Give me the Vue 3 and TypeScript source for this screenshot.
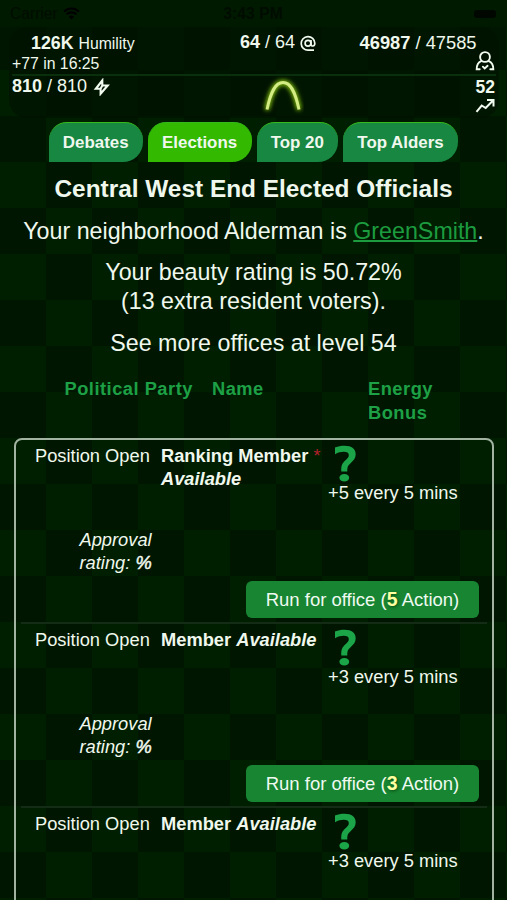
<script setup lang="ts">
interface Office {
  title: string
  bonus: number
  cost: number
  starred?: boolean
}

const tabs = ['Debates', 'Elections', 'Top 20', 'Top Alders']
const activeTab = 'Elections'

const offices: Office[] = [
  { title: 'Ranking Member', bonus: 5, cost: 5, starred: true },
  { title: 'Member', bonus: 3, cost: 3 },
  { title: 'Member', bonus: 3, cost: 3 },
]
</script>

<template>
  <div class="screen">
    <div class="status">
      <span class="carrier">Carrier
        <svg class="wifi" viewBox="0 0 16 12" width="17" height="13">
          <path d="M8 11.6 5.6 9a3.4 3.4 0 0 1 4.8 0z" />
          <path d="M3.4 6.8a6.5 6.5 0 0 1 9.2 0M1 4.2a9.9 9.9 0 0 1 14 0" fill="none" stroke="#000" stroke-width="2" />
        </svg>
      </span>
      <span class="clock">3:43 PM</span>
      <span class="battery"></span>
    </div>

    <header class="stats">
      <div class="stats-top">
        <div class="humility">
          <div class="amount"><b>126K</b> <span class="small word">Humility</span></div>
          <div class="small regen">+77 in 16:25</div>
        </div>
        <div class="actions"><b>64</b> / 64
          <svg viewBox="0 0 16 17" width="16" height="17" fill="none" stroke="#f2fbf0" stroke-width="1.7">
            <path d="M14 15.200H8.2A6.8 6.8 0 1 1 14.8 8.2c0 3.6-3.8 3.6-3.8.8V5" />
            <circle cx="8" cy="8.2" r="2.9" />
          </svg>
        </div>
        <div class="health">
          <div><b>46987</b> / 47585</div>
          <svg viewBox="0 0 20 20" width="20" height="20" fill="none" stroke="#f2fbf0" stroke-width="1.9" stroke-linecap="round">
            <circle cx="10" cy="6" r="4.9" />
            <path d="M6.200 10.200C3 11.500 1.700 14 1.700 18.200h3M13.800 10.200c3.200 1.300 4.500 3.800 4.500 8h-3" />
            <path d="M7.900 15.700 9.700 17.500l2.900-2.700" stroke-width="1.900" />
          </svg>
        </div>
      </div>
      <div class="stats-bottom">
        <div class="energy"><b>810</b> / 810
          <svg viewBox="0 0 17 18" width="17" height="18" fill="none" stroke="#f2fbf0" stroke-width="2.1">
            <path d="M9.300 2.500 2.800 10.800H7.600V15.800L14.700 7.500H9.300zM9.300 7.500 7.600 10.800" />
          </svg>
        </div>
        <svg class="arch" viewBox="0 0 44 40" width="44" height="40" fill="none">
          <path d="M7 33.500C11 15 15.500 6.500 23 6.500S35 15 39 33.500" />
        </svg>
        <div class="level">
          <b>52</b>
          <svg viewBox="0 0 20 15" width="20" height="15" fill="none" stroke="#f2fbf0" stroke-width="2">
            <path d="M1.500 13.800 6.700 7.500l4 2.500L17.500 3M12 2h6.500v6.500" />
          </svg>
        </div>
      </div>
    </header>

    <nav class="tabs">
      <a v-for="tab in tabs" :key="tab" class="tab" :class="{ active: tab === activeTab }">{{ tab }}</a>
    </nav>

    <main>
      <h1>Central West End Elected Officials</h1>
      <p>Your neighborhood Alderman is <a class="link">GreenSmith</a>.</p>
      <p>Your beauty rating is 50.72%<br />(13 extra resident voters).</p>
      <p>See more offices at level 54</p>

      <div class="columns">
        <span>Political Party</span>
        <span>Name</span>
        <span>Energy<br />Bonus</span>
      </div>

      <section class="list">
        <article v-for="(office, i) in offices" :key="i" class="office">
          <div class="info">
            <div>Position Open</div>
            <div class="name">
              <b>{{ office.title }}</b>&nbsp;<sup v-if="office.starred">*</sup>
              <wbr /><b class="available">Available</b>
            </div>
            <div class="bonus">
              <svg viewBox="0 0 24 38" width="24" height="38" fill="#1ba548">
                <path d="M2 3.600C5 2.300 8 1.700 11.500 1.700C18.800 1.700 22.700 5 22.700 10.300C22.700 14.300 20.500 16.500 17.800 19C15 21.500 14.300 22.500 14.300 27.500H8.300C8 21.500 9 19.500 12.300 16.500C14.600 14.400 15.800 13.200 15.800 11.200C15.800 8.800 14 7.800 10.800 7.800C8 7.800 5 8.600 2 10.200Z" />
                <ellipse cx="11.300" cy="33.700" rx="4.900" ry="3.800" />
              </svg>
              <span>+{{ office.bonus }} every 5 mins</span>
            </div>
          </div>
          <template v-if="i < 2">
            <div class="approval">Approval<br />rating: <b>%</b></div>
            <button class="run">Run for office (<b>{{ office.cost }}</b> Action)</button>
          </template>
        </article>
      </section>
    </main>
  </div>
</template>

<style>
body {
  background: #001600;
}
</style>

<style scoped>
.screen {
  box-sizing: border-box;
  width: 507px;
  height: 900px;
  overflow: hidden;
  color: #f0f8ee;
  font-family: "Liberation Sans", Arial, sans-serif;
  font-size: 18.3px;
  line-height: 23.4px;
  background: repeating-conic-gradient(#001600 0 25%, #001f00 0 50%) 46px 24px / 92px 92px;
}

.status {
  display: grid;
  grid-template-columns: 1fr auto 1fr;
  align-items: center;
  height: 27px;
  padding: 0 11px 0 10px;
  background: #001a00;
  color: #000c00;
  font-size: 15.6px;
  line-height: 27px;
}
.wifi {
  margin-left: 1px;
  vertical-align: -1px;
}
.clock {
  font-weight: 700;
  letter-spacing: 0.1px;
}
.battery {
  justify-self: end;
  width: 22px;
  height: 8px;
  border-radius: 3px;
  background: #000600;
}

.stats {
  box-sizing: border-box;
  height: 91px;
  margin: 0 8px 0 9px;
  padding: 0 3px;
  border-radius: 18px;
  background: rgba(0, 18, 0, 0.65);
  font-size: 18px;
  white-space: nowrap;
}
.stats-top {
  display: grid;
  grid-template-columns: 228px 108px 1fr;
  box-sizing: border-box;
  height: 49px;
  padding-top: 4px;
  border-bottom: 2px solid #0a2f0c;
}
.humility {
  padding-top: 1px;
}
.amount {
  padding-left: 19px;
  font-size: 17.8px;
}
.small {
  font-size: 15.8px;
}
.regen {
  line-height: 20px;
  margin-top: -1px;
}
.actions svg {
  vertical-align: -4px;
}
.health {
  display: flex;
  flex-direction: column;
  align-items: flex-end;
  font-size: 18.3px;
}
.health div {
  margin-top: -0.5px;
  padding-right: 19.5px;
}
.health svg {
  margin: -2.5px 1px 0 0;
}
.stats-bottom {
  display: grid;
  grid-template-columns: 248px 1fr auto;
}
.energy {
  line-height: 20px;
}
.energy svg {
  margin-left: 1px;
  vertical-align: -4px;
}
.arch path {
  stroke: #d3ec83;
  stroke-width: 3;
  filter: drop-shadow(0 0 2px #86bd13) drop-shadow(0 0 2px #5c9208);
}
.level {
  display: flex;
  flex-direction: column;
  align-items: flex-end;
  padding: 1px 1px 0 0;
  font-size: 17.5px;
  line-height: 21px;
}

.tabs {
  display: flex;
  justify-content: center;
  gap: 5px;
  margin-top: 4px;
}
.tab {
  box-sizing: border-box;
  height: 40px;
  padding: 0 14.500px 0 14px;
  border-top: 1px solid #35b91b;
  border-radius: 18px 18px 20px 0;
  background: #178742;
  font-size: 16.900px;
  font-weight: 700;
  line-height: 39px;
}
.tab.active {
  background: #32b900;
}

h1,
p {
  margin: 0 0 12px;
  text-align: center;
  font-size: 23.25px;
  line-height: 29.3px;
}
h1 {
  margin: 12px 0 13.500px;
  font-size: 24.4px;
}
.link {
  color: #1c9b3f;
  text-decoration: underline;
  text-decoration-thickness: 1.5px;
}
.columns {
  display: grid;
  grid-template-columns: 147.500px 156px 1fr;
  height: 61px;
  margin-top: 19px;
  padding-left: 64.500px;
  color: #1da046;
  font-weight: 700;
  line-height: 24.500px;
  letter-spacing: 0.5px;
}
.list {
  box-sizing: border-box;
  height: 520px;
  margin: 0 13px 0 14px;
  border: 2px solid #a3b3a1;
  border-radius: 8px;
}
.office {
  display: flex;
  flex-direction: column;
  box-sizing: border-box;
  height: 184px;
  margin: 0 5px;
  padding-top: 4px;
  border-bottom: 2px solid #142b15;
}
.info {
  display: grid;
  grid-template-columns: 126px 167px 1fr;
  height: 84px;
  padding-left: 14px;
}
.name sup {
  color: #b3202c;
  font-size: 18px;
  line-height: 0;
  vertical-align: 0;
}
.available,
.approval {
  font-style: italic;
}
.bonus {
  display: flex;
  flex-direction: column;
}
.bonus svg {
  margin: 0 0 -1px 5px;
}
.approval {
  padding-left: 58.500px;
}
.approval b {
  font-weight: 400;
  -webkit-text-stroke: 0.5px #f0f8ee;
}
.run {
  align-self: flex-end;
  width: 233px;
  height: 37px;
  margin: 6px 8px 0 0;
  padding: 0;
  border: 0;
  border-radius: 6px;
  background: #178532;
  color: #effaf0;
  font: inherit;
  font-size: 18.500px;
}
.run b {
  color: #fdffa0;
  font-size: 19.500px;
  text-shadow: 1px 1px 3px #0b4b12;
}
</style>
